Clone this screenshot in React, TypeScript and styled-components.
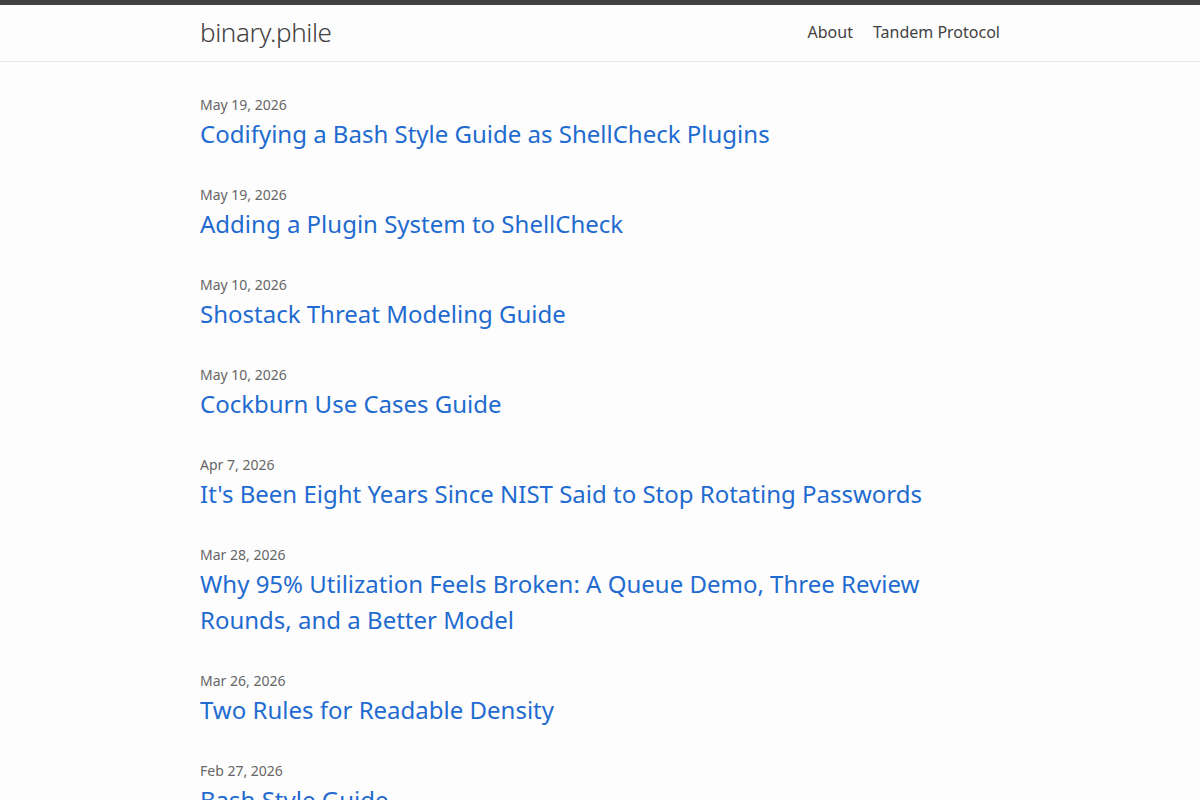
import { createGlobalStyle, styled } from 'styled-components';

const posts = [
  { date: 'May 19, 2026', title: 'Codifying a Bash Style Guide as ShellCheck Plugins' },
  { date: 'May 19, 2026', title: 'Adding a Plugin System to ShellCheck' },
  { date: 'May 10, 2026', title: 'Shostack Threat Modeling Guide' },
  { date: 'May 10, 2026', title: 'Cockburn Use Cases Guide' },
  { date: 'Apr 7, 2026', title: "It's Been Eight Years Since NIST Said to Stop Rotating Passwords" },
  {
    date: 'Mar 28, 2026',
    title: 'Why 95% Utilization Feels Broken: A Queue Demo, Three Review Rounds, and a Better Model',
  },
  { date: 'Mar 26, 2026', title: 'Two Rules for Readable Density' },
  { date: 'Feb 27, 2026', title: 'Bash Style Guide' },
  { date: 'Feb 12, 2026', title: 'Notes on Tandem Protocol' },
];

function App() {
  return (
    <>
      <GlobalStyle />
      <SiteHeader>
        <Wrapper>
          <SiteTitle href="#">binary.phile</SiteTitle>
          <Nav>
            <PageLink href="#">About</PageLink>
            <PageLink href="#">Tandem Protocol</PageLink>
          </Nav>
        </Wrapper>
      </SiteHeader>
      <Main>
        <PostList>
          {posts.map((post, i) => (
            <PostItem key={i}>
              <PostMeta>{post.date}</PostMeta>
              <PostTitle>
                <PostLink href="#">{post.title}</PostLink>
              </PostTitle>
            </PostItem>
          ))}
        </PostList>
      </Main>
    </>
  );
}

const GlobalStyle = createGlobalStyle`
  html, body {
    margin: 0;
    padding: 0;
    background: #fdfdfd;
  }
  body {
    font-family: "Noto Sans", "Open Sans", sans-serif;
    font-size: 16px;
    line-height: 1.5;
    color: #111;
  }
`;

const SiteHeader = styled.header`
  border-top: 5px solid #424242;
  border-bottom: 1px solid #e8e8e8;
`;

const Wrapper = styled.div`
  max-width: 800px;
  height: 56px;
  margin: 0 auto;
  display: flex;
  justify-content: space-between;
  align-items: flex-start;
`;

const SiteTitle = styled.a`
  font-size: 26px;
  font-weight: 300;
  line-height: 54px;
  letter-spacing: -0.4px;
  color: #424242;
  text-decoration: none;
`;

const Nav = styled.nav`
  display: flex;
  gap: 20px;
  line-height: 54px;
`;

const PageLink = styled.a`
  color: #424242;
  text-decoration: none;
  font-size: 16px;
`;

const Main = styled.main`
  max-width: 800px;
  margin: 0 auto;
  padding-top: 32px;
`;

const PostList = styled.ul`
  list-style: none;
  margin: 0;
  padding: 0;
`;

const PostItem = styled.li`
  margin-bottom: 32px;
`;

const PostMeta = styled.span`
  display: block;
  font-size: 14px;
  line-height: 21px;
  color: #666;
`;

const PostTitle = styled.h3`
  margin: 1px 0 0;
  font-size: 24px;
  font-weight: 400;
  line-height: 36px;
`;

const PostLink = styled.a`
  color: #1f6bd0;
  text-decoration: none;
`;

export default App;
